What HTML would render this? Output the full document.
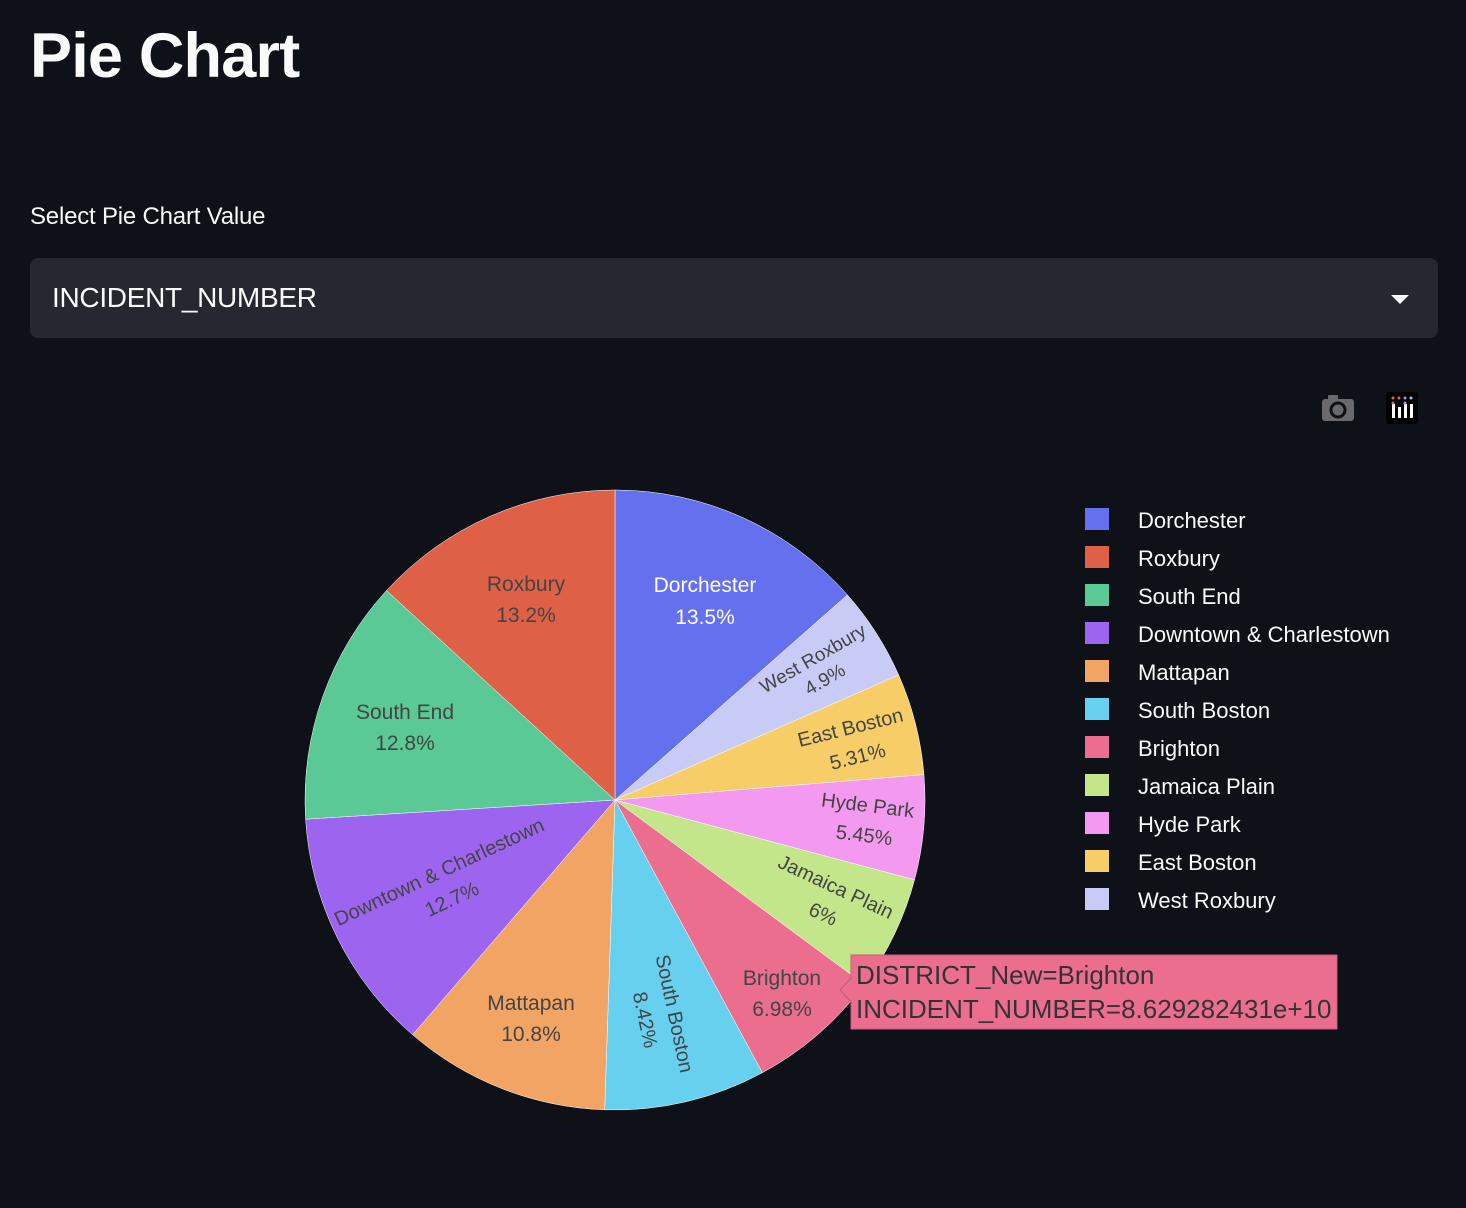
<!DOCTYPE html>
<html><head><meta charset="utf-8"><style>
body{margin:0;background:#0e1117;width:1466px;height:1208px;overflow:hidden;font-family:"Source Sans Pro","Liberation Sans",sans-serif;color:#fafafa;position:relative}
h1{position:absolute;left:30px;top:20px;margin:0;font-size:63px;font-weight:700;letter-spacing:-0.8px}
.lab{position:absolute;left:30px;top:203px;font-size:24px;letter-spacing:-0.2px}
.sel{position:absolute;left:30px;top:258px;width:1408px;height:80px;background:#262730;border-radius:8px}
.sel span{position:absolute;left:22px;top:24px;font-size:28px;letter-spacing:-0.3px}
.sel i{position:absolute;right:29px;top:37px;border-left:9px solid transparent;border-right:9px solid transparent;border-top:9px solid #fafafa}
svg{position:absolute;left:0;top:0}
</style></head><body>
<h1>Pie Chart</h1>
<div class="lab">Select Pie Chart Value</div>
<div class="sel"><span>INCIDENT_NUMBER</span><i></i></div>
<svg width="1466" height="1208" font-family="Liberation Sans, sans-serif">
<g id="pie"></g>
<g font-size="21" text-anchor="middle" fill="#444">
<text x="705" y="592" fill="#fff">Dorchester</text><text x="705" y="624" fill="#fff">13.5%</text>
<text x="526" y="591">Roxbury</text><text x="526" y="622">13.2%</text>
<text x="405" y="719">South End</text><text x="405" y="750">12.8%</text>
<g transform="translate(442,878) rotate(-25)" font-size="20"><text x="0" y="0">Downtown &amp; Charlestown</text><text x="0" y="30">12.7%</text></g>
<text x="531" y="1010">Mattapan</text><text x="531" y="1041">10.8%</text>
<g transform="translate(668,1015) rotate(78)" font-size="20"><text x="0" y="0">South Boston</text><text x="0" y="30">8.42%</text></g>
<text x="782" y="985">Brighton</text><text x="782" y="1016">6.98%</text>
<g transform="translate(833,893) rotate(25)" font-size="20"><text x="0" y="0">Jamaica Plain</text><text x="0" y="30">6%</text></g>
<g transform="translate(867,812) rotate(7)" font-size="20"><text x="0" y="0">Hyde Park</text><text x="0" y="30">5.45%</text></g>
<g transform="translate(852,734) rotate(-14)" font-size="20"><text x="0" y="0">East Boston</text><text x="0" y="30">5.31%</text></g>
<g transform="translate(816,664) rotate(-30)" font-size="19"><text x="0" y="0">West Roxbury</text><text x="0" y="24">4.9%</text></g>
</g>
<g id="leg" font-size="22" fill="#fafafa"></g>
<path d="M840 990 L851 978 L851 955 L1337 955 L1337 1029 L851 1029 L851 1002 Z" fill="#ec6e8f" stroke="#c85a78" stroke-width="1"/>
<text x="856" y="984" font-size="26" fill="#333">DISTRICT_New=Brighton</text>
<text x="856" y="1018" font-size="26" fill="#333">INCIDENT_NUMBER=8.629282431e+10</text>
<g fill="#6a6a6e"><rect x="1322" y="399" width="32" height="22" rx="3"/><rect x="1328" y="395" width="10" height="6" rx="1"/></g>
<circle cx="1338" cy="410" r="7" fill="none" stroke="#0e1117" stroke-width="3"/>
<rect x="1386" y="392" width="32" height="32" rx="3" fill="#000"/>
<g fill="#fff"><rect x="1392" y="404" width="3" height="14"/><rect x="1398" y="407" width="3" height="11"/><rect x="1404" y="404" width="3" height="14"/><rect x="1410" y="404" width="3" height="14"/></g>
<g><circle cx="1393" cy="398" r="1.5" fill="#e85a7a"/><circle cx="1399" cy="398" r="1.5" fill="#e85a7a"/><circle cx="1405" cy="398" r="1.5" fill="#b58fe0"/><circle cx="1411" cy="398" r="1.5" fill="#7fd6f0"/><circle cx="1393" cy="403" r="1.5" fill="#e85a7a"/><circle cx="1405" cy="403" r="1.5" fill="#b58fe0"/></g>
</svg>
<script>
var d=[["Dorchester",13.5,"#6570ef"],["West Roxbury",4.9,"#c7cbf5"],["East Boston",5.31,"#f7cd67"],["Hyde Park",5.45,"#f39af0"],["Jamaica Plain",6,"#c3e68a"],["Brighton",6.98,"#ec6e8f"],["South Boston",8.42,"#67d0ee"],["Mattapan",10.8,"#f2a465"],["Downtown & Charlestown",12.7,"#9d64ef"],["South End",12.8,"#5bc995"],["Roxbury",13.2,"#de6046"]];
var tot=0;d.forEach(function(x){tot+=x[1]});
var cx=615,cy=800,r=310,a=0,s="";
d.forEach(function(x){var b=a+x[1]/tot*2*Math.PI;
var x1=cx+r*Math.sin(a),y1=cy-r*Math.cos(a),x2=cx+r*Math.sin(b),y2=cy-r*Math.cos(b);
s+='<path d="M'+cx+' '+cy+'L'+x1+' '+y1+'A'+r+' '+r+' 0 '+((b-a)>Math.PI?1:0)+' 1 '+x2+' '+y2+'Z" fill="'+x[2]+'" stroke="#fff" stroke-width="0.5"/>';a=b;});
document.getElementById("pie").innerHTML=s;
var o=["Dorchester","Roxbury","South End","Downtown & Charlestown","Mattapan","South Boston","Brighton","Jamaica Plain","Hyde Park","East Boston","West Roxbury"];
var L="";o.forEach(function(n,i){var c;d.forEach(function(x){if(x[0]==n)c=x[2]});var y=508+i*38;
L+='<rect x="1085" y="'+y+'" width="24" height="22" fill="'+c+'"/><text x="1138" y="'+(y+20)+'">'+n.replace("&","&amp;")+'</text>';});
document.getElementById("leg").innerHTML=L;
</script>
</body></html>
